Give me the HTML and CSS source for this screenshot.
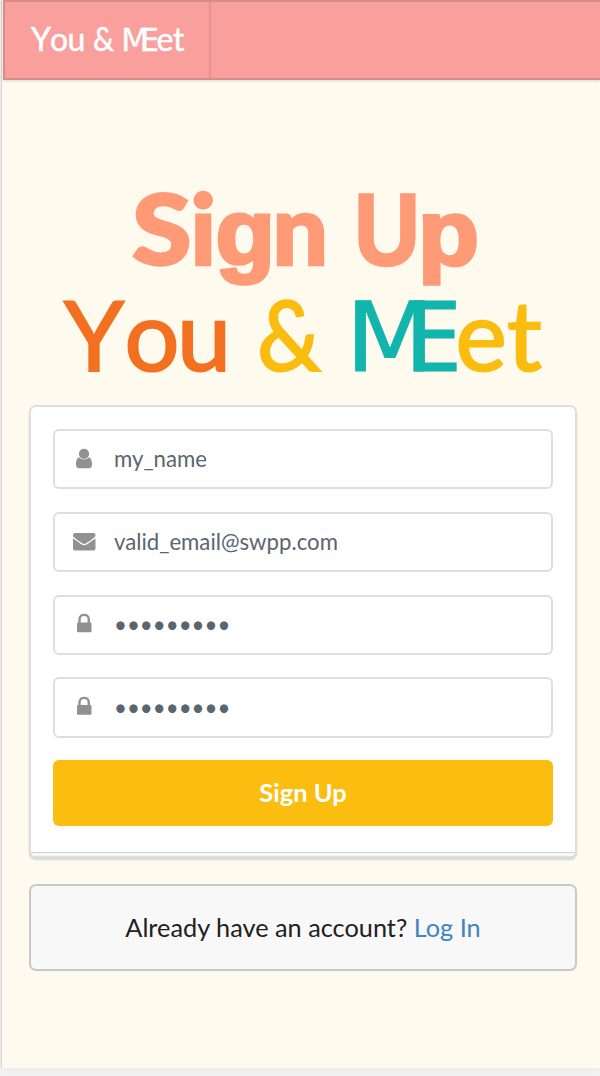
FILE: index.html
```html
<!DOCTYPE html>
<html lang="en">
<head>
<meta charset="utf-8">
<title>You &amp; MEet - Sign Up</title>
<link rel="stylesheet" href="styles.css">
</head>
<body>
<div class="page">
  <header class="navbar">
    <a class="brand">
      <svg class="brand-logo" width="204" height="76" viewBox="5 2 204 76">
        <text y="50.700" x="31 50 67.500">You</text>
        <text y="50.700" x="93" textLength="21" lengthAdjust="spacingAndGlyphs">&amp;</text>
        <text y="50.700"><tspan class="mark" x="121" textLength="28" lengthAdjust="spacingAndGlyphs">M</tspan><tspan class="mark" x="140.500" textLength="18.500" lengthAdjust="spacingAndGlyphs">E</tspan><tspan x="156.500 173">et</tspan></text>
      </svg>
    </a>
  </header>
  <main class="content">
    <svg class="hero" width="548" height="215" viewBox="29 185 548 215">
      <g class="hero-title">
        <text y="265"><tspan x="132" textLength="59.500" lengthAdjust="spacingAndGlyphs">S</tspan><tspan x="190.500">i</tspan><tspan class="round" x="215.500" textLength="59.500" lengthAdjust="spacingAndGlyphs">g</tspan><tspan x="272.500">n</tspan></text>
        <text y="265"><tspan class="round-cap" x="354" textLength="66" lengthAdjust="spacingAndGlyphs">U</tspan><tspan class="round" x="418" textLength="61" lengthAdjust="spacingAndGlyphs">p</tspan></text>
      </g>
      <g class="hero-logo">
        <text class="orange" y="371"><tspan x="64" textLength="60" lengthAdjust="spacingAndGlyphs">Y</tspan><tspan x="124.500 177">ou</tspan></text>
        <text class="yellow" y="371" x="257" textLength="64" lengthAdjust="spacingAndGlyphs">&amp;</text>
        <text y="371"><tspan class="teal mark" x="345.500" textLength="89" lengthAdjust="spacingAndGlyphs">M</tspan><tspan class="teal mark" x="405" textLength="57" lengthAdjust="spacingAndGlyphs">E</tspan><tspan class="yellow" x="455.500 507">et</tspan></text>
      </g>
    </svg>
    <form class="card">
      <div class="field">
        <svg class="icon" width="24" height="24" viewBox="0 0 24 24"><circle cx="12" cy="6.800" r="5.100"/><path d="M7.200 10.200C4.600 11 4 14.400 4 17.600Q4 21.300 7.200 21.300H16.800Q20 21.300 20 17.600C20 14.400 19.400 11 16.800 10.200C14.200 13.200 9.800 13.200 7.200 10.200Z"/></svg>
        <span>my_name</span>
      </div>
      <div class="field">
        <svg class="icon" width="24" height="24" viewBox="0 0 24 24"><path d="M1 5Q1 3 3 3H21.500Q23.500 3 23.500 5C23.500 7 21.500 8.500 14.500 13Q12.200 14.800 10 13C3 8.500 1 7 1 5ZM1 8.300Q3 10 9 14Q12.200 16.700 15.500 14Q21.500 10 23.500 8.300V18.500Q23.500 20.600 21.500 20.600H3Q1 20.600 1 18.500Z"/></svg>
        <span>valid_email@swpp.com</span>
      </div>
      <div class="field">
        <svg class="icon lock" width="24" height="24" viewBox="0 0 24 24"><path class="shackle" d="M7.500 12V8.500C7.500 2.300 16.800 2.300 16.800 8.500V12"/><rect x="5" y="11.500" width="14.500" height="9.700" rx="1"/></svg>
        <span class="dots">•••••••••</span>
      </div>
      <div class="field">
        <svg class="icon lock" width="24" height="24" viewBox="0 0 24 24"><path class="shackle" d="M7.500 12V8.500C7.500 2.300 16.800 2.300 16.800 8.500V12"/><rect x="5" y="11" width="14.500" height="9.700" rx="1"/></svg>
        <span class="dots low">•••••••••</span>
      </div>
      <button class="submit" type="button">Sign Up</button>
      <div class="card-foot"></div>
    </form>
    <div class="message">Already have an account?&nbsp;<a class="link">Log In</a></div>
  </main>
</div>
</body>
</html>
```
FILE: styles.css
```css
* { box-sizing: border-box; }
body {
  margin: 0;
  height: 1076px;
  overflow: hidden;
  background: #f2f2f2;
  font-family: Lato, sans-serif;
}
.page {
  height: 1068px;
  margin-left: 1px;
  padding-left: 1px;
  border-left: 1px solid #d4d4d6;
  background: #fffaee;
  box-shadow: 0 0 8px rgba(0, 0, 0, 0.06);
}
.navbar {
  height: 80px;
  display: flex;
  border: 2px solid #d98d8b;
  border-right: 0;
  background: #f9a09d;
  box-shadow: 0 1px 3px rgba(0, 0, 0, 0.15);
}
.brand {
  width: 206px;
  border-right: 2px solid #e59390;
}
.brand-logo {
  display: block;
  fill: #fff;
  stroke: #fff;
  stroke-width: 0.500;
  font-size: 32px;
}
.content { padding: 105px 23px 0 26px; }
.hero { display: block; overflow: visible; }
.hero-title {
  font-size: 98px;
  font-weight: 900;
  fill: #ff9a76;
  stroke: #ff9a76;
  stroke-width: 2.500;
}
.round, .round-cap { font-family: "Liberation Sans", sans-serif; }
.round { font-size: 93px; stroke-width: 3.500; }
.round-cap { font-size: 102px; }
.hero-logo { font-size: 97px; font-weight: 400; stroke-width: 2; }
.mark { font-family: "DejaVu Sans", sans-serif; }
.brand-logo .mark { stroke-width: 0.300; }
.orange { fill: #f37021; stroke: #f37021; }
.yellow { fill: #fbbc10; stroke: #fbbc10; }
.teal { fill: #12b5ac; stroke: #12b5ac; stroke-width: 0.800; }
.card {
  height: 453px;
  margin-top: 5px;
  padding: 22px 22px 0;
  display: flex;
  flex-direction: column;
  border: 2px solid #dededf;
  border-radius: 7px;
  background: #fff;
  box-shadow: 0 2px 2px #d5d5d2;
}
.field {
  flex-shrink: 0;
  height: 60px;
  margin-bottom: 23px;
  padding-left: 17px;
  display: flex;
  align-items: center;
  gap: 18px;
  border: 2px solid #dededf;
  border-radius: 6px;
  color: #5b6570;
  font-size: 22.200px;
}
.field span { padding-bottom: 1px; }
.field .dots { font-size: 22.300px; }
.field .low { padding-bottom: 0; }
.field:nth-child(3) { margin-bottom: 22px; }
.field:nth-child(4) { height: 61px; margin-bottom: 22px; }
.icon { fill: #919191; }
.lock { margin-top: -4px; }
.shackle { fill: none; stroke: #919191; stroke-width: 2.400; }
.submit {
  flex-shrink: 0;
  height: 66px;
  padding: 0 0 2px;
  border: 0;
  border-radius: 6px;
  background: #fbbd10;
  color: #fff;
  font: bold 25.500px Lato, sans-serif;
}
.card-foot {
  flex-shrink: 0;
  height: 4px;
  margin: 26px -22px 0;
  border-top: 1px solid #d0d0d2;
  border-radius: 0 0 5px 5px;
  background: #f7f7f7;
}
.message {
  height: 87px;
  margin-top: 26px;
  padding-bottom: 2px;
  display: flex;
  align-items: center;
  justify-content: center;
  border: 2px solid #c9c9ca;
  border-radius: 7px;
  background: #f8f8f8;
  color: #212121;
  font-size: 25.300px;
}
.link { color: #4183c4; }
```
